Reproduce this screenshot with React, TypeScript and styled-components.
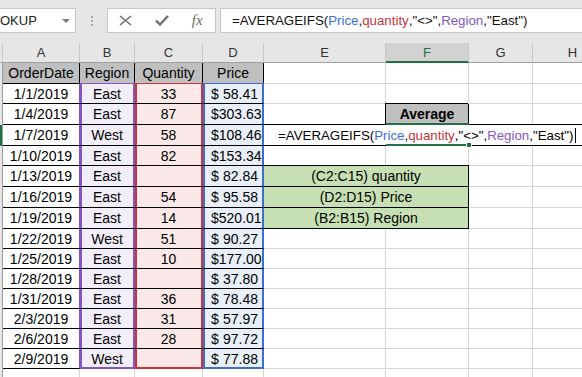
import React from 'react';
import styled, { createGlobalStyle, css } from 'styled-components';

const GlobalStyle = createGlobalStyle`
  body {
    margin: 0;
    background: #ffffff;
  }
`;

const GRID_LINE = '#d4d4d4';
const TABLE_LINE = '#000000';
const GREEN = '#217346';

const PURPLE = '#8257c2';
const RED = '#c8353c';
const BLUE = '#3d6fcf';

const rowHeights = [21, 20, 21, 21, 20, 21, 21, 21, 20, 20, 20, 20, 20, 20, 20];

const orders = [
  ['1/1/2019', 'East', '33', '58.41'],
  ['1/4/2019', 'East', '87', '303.63'],
  ['1/7/2019', 'West', '58', '108.46'],
  ['1/10/2019', 'East', '82', '153.34'],
  ['1/13/2019', 'East', '', '82.84'],
  ['1/16/2019', 'East', '54', '95.58'],
  ['1/19/2019', 'East', '14', '520.01'],
  ['1/22/2019', 'West', '51', '90.27'],
  ['1/25/2019', 'East', '10', '177.00'],
  ['1/28/2019', 'East', '', '37.80'],
  ['1/31/2019', 'East', '36', '78.48'],
  ['2/3/2019', 'East', '31', '57.97'],
  ['2/6/2019', 'East', '28', '97.72'],
  ['2/9/2019', 'West', '', '77.88'],
];

const notes = ['(C2:C15) quantity', '(D2:D15) Price', '(B2:B15) Region'];

const Page = styled.div`
  width: 582px;
  height: 377px;
  overflow: hidden;
  background: #ffffff;
  font-family: 'Liberation Sans', Arial, sans-serif;
`;

const Toolbar = styled.div`
  box-sizing: border-box;
  height: 43px;
  padding-top: 8px;
  background: #e6e6e6;
  display: flex;
  align-items: flex-start;
`;

const Box = styled.div`
  box-sizing: border-box;
  height: 25px;
  background: #ffffff;
  border: 1px solid #c6c6c6;
  display: flex;
  align-items: center;
`;

const NameBox = styled(Box)`
  width: 76px;
  border-left: none;
  justify-content: space-between;
  padding-right: 5px;
  font-size: 13px;
  color: #222;
`;

const DropArrow = styled.span`
  width: 0;
  height: 0;
  border-left: 4px solid transparent;
  border-right: 4px solid transparent;
  border-top: 4px solid #7a7a7a;
`;

const Grip = styled.div`
  margin: 8px 0 0 15px;
  display: flex;
  flex-direction: column;
  gap: 2px;
  & > span {
    width: 2px;
    height: 2px;
    background: #a8a8a8;
  }
`;

const ButtonBox = styled(Box)`
  width: 109px;
  margin-left: 14px;
`;

const ToolButton = styled.div`
  width: 36px;
  display: flex;
  justify-content: center;
  align-items: center;
  color: #6e6e6e;
`;

const Fx = styled.span`
  font-family: 'Liberation Serif', 'Times New Roman', serif;
  font-style: italic;
  font-size: 15px;
  color: #6a6a6a;
`;

const FormulaInput = styled(Box)`
  flex: 1;
  margin-left: 4px;
  border-right: none;
  padding-left: 11px;
  font-size: 13.3px;
  color: #111;
  white-space: nowrap;
`;

const Sheet = styled.div`
  display: grid;
  grid-template-columns: 3px 77px 55px 68px 61px 122px 83px 64px 80px;
  grid-template-rows: 20px ${rowHeights.map(h => `${h}px`).join(' ')} 20px;
`;

const ColHead = styled.div<{ $active?: boolean }>`
  box-sizing: border-box;
  display: flex;
  align-items: center;
  justify-content: center;
  font-size: 13px;
  color: ${p => (p.$active ? GREEN : '#333')};
  background: ${p => (p.$active ? '#d2d2d2' : '#e6e6e6')};
  border-right: 1px solid #c8c8c8;
  border-bottom: ${p => (p.$active ? `2px solid ${GREEN}` : '1px solid #a0a0a0')};
`;

const RowHead = styled.div<{ $active?: boolean }>`
  box-sizing: border-box;
  background: ${p => (p.$active ? GREEN : '#e6e6e6')};
  border-right: 1px solid #9a9a9a;
`;

interface CellProps {
  $bg?: string;
  $line?: string;
  $right?: string;
  $span?: number;
  $bold?: boolean;
  $hl?: string;
  $first?: boolean;
  $last?: boolean;
  $boxed?: boolean;
  $top?: boolean;
}

const Cell = styled.div<CellProps>`
  box-sizing: border-box;
  position: relative;
  display: flex;
  align-items: center;
  justify-content: center;
  padding: 0 4px;
  font-size: 14px;
  color: #000;
  white-space: nowrap;
  grid-column: span ${p => p.$span ?? 1};
  background: ${p => p.$bg ?? '#ffffff'};
  border-right: 1px solid ${p => p.$right ?? p.$line ?? GRID_LINE};
  border-bottom: 1px solid ${p => p.$line ?? GRID_LINE};
  font-weight: ${p => (p.$bold ? 700 : 400)};
  ${p =>
    p.$hl &&
    css`
      z-index: 1;
      border-right-color: ${p.$hl};
      ${p.$last ? `border-bottom-color: ${p.$hl};` : ''}
      box-shadow: inset 2px 0 0 ${p.$hl}, inset -1px 0 0 ${p.$hl}
        ${p.$first ? `, 0 -1px 0 ${p.$hl}` : ''}${p.$last ? `, inset 0 -1px 0 ${p.$hl}` : ''};
    `}
  ${p =>
    p.$top &&
    css`
      z-index: 1;
      box-shadow: 0 -1px 0 #000;
    `}
  ${p =>
    p.$boxed &&
    css`
      z-index: 1;
      box-shadow: -1px -1px 0 #000;
    `}
`;

const PriceCell = styled(Cell)`
  justify-content: space-between;
  padding: 0 5px 0 8px;
`;

const FormulaCell = styled(Cell)`
  justify-content: flex-start;
  padding-left: 14px;
  font-size: 13.3px;
  z-index: 2;
  box-shadow: 0 -1px 0 #000;
`;

const Ref = styled.span<{ $color: string }>`
  color: ${p => p.$color};
`;

const Caret = styled.span`
  width: 1px;
  height: 15px;
  margin-left: 2px;
  background: #000;
`;

// green frame of the active cell (F4) drawn over the overflowing formula
const ActiveCell = styled.div`
  position: absolute;
  left: 122px;
  top: -2px;
  width: 83px;
  height: 23px;
  box-sizing: border-box;
  border-top: 2px solid ${GREEN};
  border-bottom: 2px solid ${GREEN};
  pointer-events: none;
  &::after {
    content: '';
    position: absolute;
    right: -3px;
    bottom: -4px;
    width: 6px;
    height: 6px;
    background: ${GREEN};
    border: 1px solid #fff;
    box-sizing: border-box;
  }
`;

const FormulaText = () => (
  <>
    {'=AVERAGEIFS('}
    <Ref $color={BLUE}>Price</Ref>
    {','}
    <Ref $color={RED}>quantity</Ref>
    {',"<>",'}
    <Ref $color={PURPLE}>Region</Ref>
    {',"East")'}
  </>
);

const Blank = ({ count = 1 }: { count?: number }) => (
  <>
    {Array.from({ length: count }).map((_, i) => (
      <Cell key={i} />
    ))}
  </>
);

const SideCells = ({ index }: { index: number }) => {
  if (index === 2) {
    return (
      <>
        <Cell />
        <Cell $bg="#bfbfbf" $bold $line={TABLE_LINE} $boxed>
          Average
        </Cell>
        <Blank count={2} />
      </>
    );
  }
  if (index === 3) {
    return (
      <FormulaCell $span={4} $line={TABLE_LINE}>
        <FormulaText />
        <Caret />
        <ActiveCell />
      </FormulaCell>
    );
  }
  if (index >= 5 && index <= 7) {
    return (
      <>
        <Cell $span={2} $bg="#c6e0b4" $line={TABLE_LINE} $top={index === 5}>
          {notes[index - 5]}
        </Cell>
        <Blank count={2} />
      </>
    );
  }
  return <Blank count={4} />;
};

export default function App() {
  const letters = ['A', 'B', 'C', 'D', 'E', 'F', 'G', 'H'];
  const last = orders.length;

  return (
    <Page>
      <GlobalStyle />
      <Toolbar>
        <NameBox>
          OKUP
          <DropArrow />
        </NameBox>
        <Grip>
          <span />
          <span />
          <span />
        </Grip>
        <ButtonBox>
          <ToolButton>
            <svg width="13" height="11" viewBox="0 0 13 11">
              <path d="M1 1 L12 10 M12 1 L1 10" stroke="#6e6e6e" strokeWidth="1.6" fill="none" />
            </svg>
          </ToolButton>
          <ToolButton>
            <svg width="14" height="11" viewBox="0 0 14 11">
              <path d="M1 5.5 L5 9.5 L13 1" stroke="#6e6e6e" strokeWidth="2.4" fill="none" />
            </svg>
          </ToolButton>
          <ToolButton>
            <Fx>fx</Fx>
          </ToolButton>
        </ButtonBox>
        <FormulaInput>
          <FormulaText />
        </FormulaInput>
      </Toolbar>

      <Sheet>
        <ColHead />
        {letters.map(l => (
          <ColHead key={l} $active={l === 'F'}>
            {l}
          </ColHead>
        ))}

        <RowHead />
        <Cell $bg="#bfbfbf" $line={TABLE_LINE}>OrderDate</Cell>
        <Cell $bg="#bfbfbf" $line={TABLE_LINE}>Region</Cell>
        <Cell $bg="#bfbfbf" $line={TABLE_LINE}>Quantity</Cell>
        <Cell $bg="#bfbfbf" $line={TABLE_LINE}>Price</Cell>
        <Blank count={4} />

        {orders.map(([date, region, qty, price], i) => {
          const idx = i + 1;
          const first = i === 0;
          const isLast = i === last - 1;
          return (
            <React.Fragment key={date}>
              <RowHead $active={idx === 3} />
              <Cell $line={TABLE_LINE} $right={PURPLE}>
                {date}
              </Cell>
              <Cell $line={TABLE_LINE} $bg="#f1eef9" $hl={PURPLE} $first={first} $last={isLast}>
                {region}
              </Cell>
              <Cell $line={TABLE_LINE} $bg="#fbe9ea" $hl={RED} $first={first} $last={isLast}>
                {qty}
              </Cell>
              <PriceCell $line={TABLE_LINE} $bg="#e9eff9" $hl={BLUE} $first={first} $last={isLast}>
                <span>$</span>
                <span>{price}</span>
              </PriceCell>
              <SideCells index={idx} />
            </React.Fragment>
          );
        })}

        <RowHead />
        <Blank count={8} />
      </Sheet>
    </Page>
  );
}
